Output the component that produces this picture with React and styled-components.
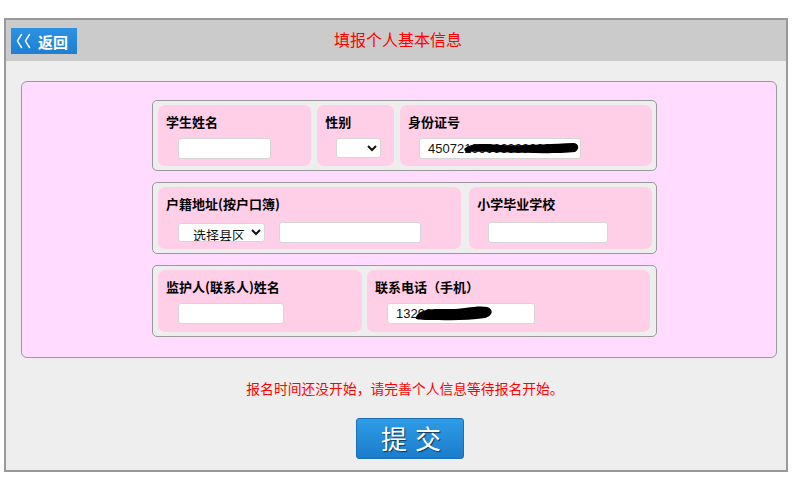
import React from 'react';
import styled, { createGlobalStyle } from 'styled-components';

const GlobalStyle = createGlobalStyle`
	* { box-sizing: border-box; }
	body {
		margin: 0;
		background: #fff;
		font-family: "Noto Sans CJK SC", "Liberation Sans", sans-serif;
	}
`;

const Frame = styled.div`
	margin: 18px 0 0 4px;
	width: 784px;
	border: 2px solid #999;
	background: #eee;
`;

const Header = styled.header`
	height: 41px;
	background: #cbcbcb;
	display: grid;
	grid-template-columns: 1fr auto 1fr;
	align-items: center;
	padding: 0 5px;
`;

const BackButton = styled.button`
	justify-self: start;
	width: 66px;
	height: 26px;
	margin-top: 1px;
	border: none;
	padding: 0 0 0 5px;
	display: flex;
	align-items: center;
	gap: 6px;
	background: linear-gradient(#2c92e2, #1f7fd2);
	color: #fff;
	font-family: "Noto Sans CJK SC", sans-serif;
	font-size: 15px;
	font-weight: 700;
	white-space: nowrap;
	cursor: pointer;

	svg {
		flex: none;
	}
`;

const Title = styled.h1`
	margin: 0 0 4px 4px;
	color: #ff0000;
	font-size: 16px;
	font-weight: 400;
`;

const Body = styled.main`
	padding: 20px 9px 11px 15px;
	display: flex;
	flex-direction: column;
	align-items: center;
`;

const Panel = styled.section`
	align-self: stretch;
	background: #ffdcff;
	border: 1px solid #9a9a9a;
	border-radius: 6px;
	padding: 18px 0 20px 130px;
	display: flex;
	flex-direction: column;
	gap: 11px;
`;

const Group = styled.div`
	width: 505px;
	height: ${p => p.$h || 72}px;
	background: #eee;
	border: 1px solid #999;
	border-radius: 5px;
	padding: 4px 4px 4px 5px;
	display: flex;
	gap: ${p => p.$gap || 6}px;
`;

const Cell = styled.div`
	width: ${p => p.$w}px;
	background: #ffcfe7;
	border-radius: 7px;
	padding: 8px 8px 0 8px;
	display: flex;
	flex-direction: column;
`;

const Label = styled.label`
	font-size: 13px;
	font-weight: 700;
	line-height: 18px;
	color: #000;
`;

const Fields = styled.div`
	margin-top: ${p => p.$top || 7}px;
	padding-left: ${p => p.$indent ?? 12}px;
	display: flex;
	align-items: center;
	gap: 14px;
`;

const InputBox = styled.div`
	position: relative;
	width: ${p => p.$w}px;
`;

const TextInput = styled.input`
	display: block;
	width: 100%;
	height: 21px;
	border: 1px solid #d6d6d6;
	border-radius: 3px;
	background: #fff;
	padding: 0 8px;
	font-family: "Liberation Sans", sans-serif;
	font-size: 13px;
	color: #111;
	outline: none;
`;

const Select = styled.select`
	width: ${p => p.$w}px;
	height: ${p => p.$h || 20}px;
	border: 1px solid #d6d6d6;
	border-radius: 3px;
	background: #fff;
	font-family: "Noto Sans CJK SC", sans-serif;
	font-size: 13px;
	padding: 0 0 0 ${p => p.$pl || 2}px;
	color: #111;
`;

const Scribble = styled.svg`
	position: absolute;
	left: ${p => p.$left}px;
	top: ${p => p.$top}px;
	pointer-events: none;
`;

const Notice = styled.p`
	margin: 20px 0 0 0;
	color: #ff0000;
	font-size: 13.8px;
	line-height: 20px;
	padding-left: 12px;
`;

const Submit = styled.button`
	margin: 20px 0 0 22px;
	width: 108px;
	height: 41px;
	border: 1px solid #1a6fb8;
	border-radius: 3px;
	background: linear-gradient(#2e9ce6, #1b7ccc);
	color: #fff;
	font-family: "Noto Sans CJK SC", sans-serif;
	font-size: 26px;
	line-height: 1;
	letter-spacing: 8px;
	padding: 0 0 2px 10px;
	text-shadow: 1px 1px 1px rgba(0, 0, 0, 0.6);
	cursor: pointer;
`;

const BackArrows = () => (
	<svg width="16" height="16" viewBox="0 0 16 16" fill="none" stroke="#fff" strokeWidth="1.4" strokeLinecap="round">
		<path d="M5.5 1.5 Q 2.5 6, 1.5 8 Q 2.5 10, 5.5 14.5" />
		<path d="M13.5 1.5 Q 10.5 6, 9.5 8 Q 10.5 10, 13.5 14.5" />
	</svg>
);

const IdScribble = () => (
	<Scribble $left={42} $top={1} width="120" height="17" viewBox="0 0 120 17">
		<path
			d="M3 10 C 10 3, 25 5, 40 6 S 90 5, 112 4 C 118 4, 119 10, 114 13 C 95 15, 60 14, 30 13 S 6 15, 3 10 Z"
			fill="#000"
		/>
	</Scribble>
);

const PhoneScribble = () => (
	<Scribble $left={28} $top={0} width="80" height="20" viewBox="0 0 80 20">
		<path
			d="M2 12 C 8 5, 20 6, 35 6 S 62 2, 72 4 C 79 6, 78 13, 70 15 C 52 18, 30 17, 14 17 S 0 16, 2 12 Z"
			fill="#000"
		/>
	</Scribble>
);

const App = () => {
	return (
		<>
			<GlobalStyle />
			<Frame>
				<Header>
					<BackButton>
						<BackArrows />
						返回
					</BackButton>
					<Title>填报个人基本信息</Title>
					<span />
				</Header>

				<Body>
					<Panel>
						<Group $h={71}>
							<Cell $w={154}>
								<Label>学生姓名</Label>
								<Fields>
									<InputBox $w={93}>
										<TextInput />
									</InputBox>
								</Fields>
							</Cell>
							<Cell $w={77}>
								<Label>性别</Label>
								<Fields $indent={11}>
									<Select $w={45} $h={20}>
										<option></option>
										<option>男</option>
										<option>女</option>
									</Select>
								</Fields>
							</Cell>
							<Cell $w={253}>
								<Label>身份证号</Label>
								<Fields $indent={11}>
									<InputBox $w={162}>
										<TextInput defaultValue='450721999999999999' readOnly />
										<IdScribble />
									</InputBox>
								</Fields>
							</Cell>
						</Group>

						<Group $gap={8}>
							<Cell $w={304}>
								<Label>户籍地址(按户口簿)</Label>
								<Fields $top={9} $indent={12}>
									<Select $w={87} $h={19} $pl={10}>
										<option>选择县区</option>
									</Select>
									<InputBox $w={142}>
										<TextInput />
									</InputBox>
								</Fields>
							</Cell>
							<Cell $w={183}>
								<Label>小学毕业学校</Label>
								<Fields $top={9} $indent={11}>
									<InputBox $w={120}>
										<TextInput />
									</InputBox>
								</Fields>
							</Cell>
						</Group>

						<Group $gap={5}>
							<Cell $w={204}>
								<Label>监护人(联系人)姓名</Label>
								<Fields $top={7}>
									<InputBox $w={106}>
										<TextInput />
									</InputBox>
								</Fields>
							</Cell>
							<Cell $w={283}>
								<Label>联系电话（手机）</Label>
								<Fields $top={7} $indent={12}>
									<InputBox $w={148}>
										<TextInput defaultValue='13299999999' readOnly />
										<PhoneScribble />
									</InputBox>
								</Fields>
							</Cell>
						</Group>
					</Panel>

					<Notice>报名时间还没开始，请完善个人信息等待报名开始。</Notice>
					<Submit>提交</Submit>
				</Body>
			</Frame>
		</>
	);
};

export default App;
